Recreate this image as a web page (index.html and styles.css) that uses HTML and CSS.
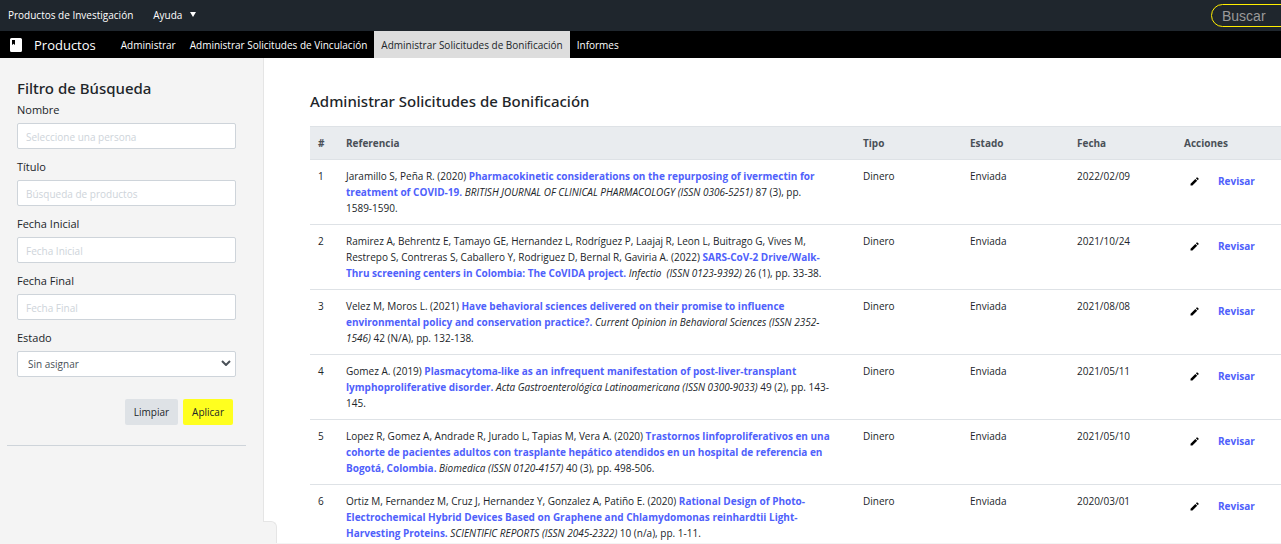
FILE: index.html
```html
<!DOCTYPE html>
<html lang="es">
<head>
<meta charset="utf-8">
<title>Administrar Solicitudes de Bonificación</title>
<link rel="stylesheet" href="styles.css">
</head>
<body>
<svg class="sprite" aria-hidden="true">
  <symbol id="pencil" viewBox="0 0 10 10"><path d="M0.6 7.4 5.9 2.1 8 4.2 2.7 9.5H0.6zM6.6 1.4 7.4 0.6Q7.9 0.3 8.3 0.6L9.5 1.8Q9.8 2.2 9.5 2.6L8.7 3.5z"/></symbol>
</svg>
<header class="topbar">
  <a class="topbar-link" href="#">Productos de Investigación</a>
  <button class="topbar-link topbar-menu" type="button">Ayuda <span class="caret"></span></button>
  <input class="search" type="search" placeholder="Buscar" aria-label="Buscar">
</header>
<nav class="navbar">
  <a class="brand" href="#">
    <svg class="brand-icon" viewBox="0 0 12 14"><path fill="#fff" fill-rule="evenodd" d="M1.5 0H10.5Q12 0 12 1.5V12.5Q12 14 10.5 14H1.5Q0 14 0 12.5V1.5Q0 0 1.5 0ZM2 2V7L3.5 5.8 5 7V2Z"/></svg>
    <span>Productos</span>
  </a>
  <a class="nav-link" href="#">Administrar</a>
  <a class="nav-link" href="#">Administrar Solicitudes de Vinculación</a>
  <a class="nav-link active" href="#">Administrar Solicitudes de Bonificación</a>
  <a class="nav-link" href="#">Informes</a>
</nav>
<div class="layout">
  <aside class="sidebar">
    <form class="filter">
      <h2 class="filter-title">Filtro de Búsqueda</h2>
      <div class="field"><label for="nombre">Nombre</label><input class="control" id="nombre" type="text" placeholder="Seleccione una persona"></div>
      <div class="field"><label for="titulo">Título</label><input class="control" id="titulo" type="text" placeholder="Búsqueda de productos"></div>
      <div class="field"><label for="inicial">Fecha Inicial</label><input class="control" id="inicial" type="text" placeholder="Fecha Inicial"></div>
      <div class="field"><label for="final">Fecha Final</label><input class="control" id="final" type="text" placeholder="Fecha Final"></div>
      <div class="field"><label for="estado">Estado</label>
        <div class="select-wrap">
          <select class="control" id="estado"><option>Sin asignar</option></select>
          <svg class="chevron" viewBox="0 0 10 6"><path d="M1 1 5 5 9 1" fill="none" stroke="#495057" stroke-width="2"/></svg>
        </div>
      </div>
      <div class="actions">
        <button class="btn" type="reset">Limpiar</button>
        <button class="btn btn-apply" type="button">Aplicar</button>
      </div>
    </form>
    <button class="drawer-tab" type="button" aria-label="Panel"></button>
  </aside>
  <main class="content">
    <h1 class="title">Administrar Solicitudes de Bonificación</h1>
    <table class="requests">
      <colgroup><col class="col-num"><col><col class="col-data"><col class="col-data"><col class="col-data"><col class="col-actions"></colgroup>
      <thead><tr><th>#</th><th>Referencia</th><th>Tipo</th><th>Estado</th><th>Fecha</th><th>Acciones</th></tr></thead>
      <tbody>
        <tr><td>1</td><td>Jaramillo S, Peña R. (2020) <a href="#">Pharmacokinetic considerations on the repurposing of ivermectin for treatment of COVID-19.</a> <em>BRITISH JOURNAL OF CLINICAL PHARMACOLOGY (ISSN 0306-5251)</em> 87 (3), pp. <span class="keep">1589-1590.</span></td><td>Dinero</td><td>Enviada</td><td>2022/02/09</td><td><div class="row-actions"><svg class="pencil"><use href="#pencil"/></svg><a href="#">Revisar</a></div></td></tr>
        <tr><td>2</td><td>Ramirez A, Behrentz E, Tamayo GE, Hernandez L, Rodríguez P, Laajaj R, Leon L, Buitrago G, Vives M, Restrepo S, Contreras S, Caballero Y, Rodriguez D, Bernal R, Gaviria A. (2022) <a href="#">SARS-CoV-2 Drive/Walk-<br>Thru screening centers in Colombia: The CoVIDA project.</a> <em>Infectio &nbsp;(ISSN 0123-9392)</em> 26 (1), pp. 33-38.</td><td>Dinero</td><td>Enviada</td><td>2021/10/24</td><td><div class="row-actions"><svg class="pencil"><use href="#pencil"/></svg><a href="#">Revisar</a></div></td></tr>
        <tr><td>3</td><td>Velez M, Moros L. (2021) <a href="#">Have behavioral sciences delivered on their promise to influence environmental policy and conservation practice?.</a> <em>Current Opinion in Behavioral Sciences (ISSN 2352-<br>1546)</em> 42 (N/A), pp. 132-138.</td><td>Dinero</td><td>Enviada</td><td>2021/08/08</td><td><div class="row-actions"><svg class="pencil"><use href="#pencil"/></svg><a href="#">Revisar</a></div></td></tr>
        <tr><td>4</td><td>Gomez A. (2019) <a href="#">Plasmacytoma-like as an infrequent manifestation of post-liver-transplant lymphoproliferative disorder.</a> <em>Acta Gastroenterológica Latinoamericana (ISSN 0300-9033)</em> 49 (2), pp. 143-<br>145.</td><td>Dinero</td><td>Enviada</td><td>2021/05/11</td><td><div class="row-actions"><svg class="pencil"><use href="#pencil"/></svg><a href="#">Revisar</a></div></td></tr>
        <tr><td>5</td><td>Lopez R, Gomez A, Andrade R, Jurado L, Tapias M, Vera A. (2020) <a href="#">Trastornos linfoproliferativos en una cohorte de pacientes adultos con trasplante hepático atendidos en un hospital de referencia en Bogotá, Colombia.</a> <em>Biomedica (ISSN 0120-4157)</em> 40 (3), pp. 498-506.</td><td>Dinero</td><td>Enviada</td><td>2021/05/10</td><td><div class="row-actions"><svg class="pencil"><use href="#pencil"/></svg><a href="#">Revisar</a></div></td></tr>
        <tr><td>6</td><td>Ortiz M, Fernandez M, Cruz J, Hernandez Y, Gonzalez A, Patiño E. (2020) <a href="#">Rational Design of Photo-<br>Electrochemical Hybrid Devices Based on Graphene and Chlamydomonas reinhardtii Light-<br>Harvesting Proteins.</a> <em>SCIENTIFIC REPORTS (ISSN 2045-2322)</em> 10 (n/a), pp. 1-11.</td><td>Dinero</td><td>Enviada</td><td>2020/03/01</td><td><div class="row-actions"><svg class="pencil"><use href="#pencil"/></svg><a href="#">Revisar</a></div></td></tr>
      </tbody>
    </table>
  </main>
</div>
</body>
</html>
```
FILE: styles.css
```css
* { box-sizing: border-box; }
body {
  margin: 0;
  height: 100vh;
  display: flex;
  flex-direction: column;
  overflow: hidden;
  background: #fff;
  color: #212529;
  font: 10px/16px "Segoe UI", "Open Sans", "Noto Sans", sans-serif;
}
a { text-decoration: none; color: inherit; }
button, input, select { font: inherit; }
.sprite { position: absolute; width: 0; height: 0; }

.topbar {
  flex: none;
  display: flex;
  align-items: center;
  gap: 20px;
  height: 31px;
  padding-left: 8px;
  background: #1f262d;
  overflow: hidden;
}
.topbar-link { flex: none; padding: 0 0 2px; color: #fff; }
.topbar-menu { display: flex; align-items: center; gap: 8px; border: 0; background: none; }
.caret { border: 3px solid transparent; border-top: 5px solid #fff; border-bottom: 0; }
.search {
  flex: none;
  width: 180px;
  height: 23px;
  margin-left: auto;
  margin-right: -110px;
  padding: 0 10px;
  border: 1px solid #ffee00;
  border-radius: 12px;
  background: transparent;
  color: #fff;
  font: 14px/20px "Liberation Sans", Arial, sans-serif;
}
.search::placeholder { color: #9a9a9a; opacity: 1; }

.navbar { flex: none; display: flex; height: 27px; padding-left: 10px; background: #000; color: #fff; }
.brand { display: flex; align-items: center; gap: 12px; margin-right: 18px; font-size: 13px; }
.brand-icon { width: 12px; height: 14px; }
.nav-link { display: flex; align-items: center; padding: 0 7px; }
.nav-link.active { background: #ddd; color: #212529; }

.layout { flex: 1; min-height: 0; display: flex; border-bottom: 1px solid #f4f4f4; }
.sidebar { position: relative; flex: none; width: 264px; background: #f4f4f4; border-right: 1px solid #e5e5e5; }
.filter { margin: 0 17px 0 7px; padding: 20px 10px; border-bottom: 1px solid #ced4da; }
.filter-title { margin: 0 0 3px; font: 500 15px/21px "Segoe UI", "Noto Sans", sans-serif; }
.field { margin-bottom: 10px; font-size: 11px; }
.field label { display: block; margin-bottom: 5px; }
.control {
  display: block;
  width: 100%;
  height: 26px;
  padding: 2px 8px 0;
  border: 1px solid #ced4da;
  border-radius: 2px;
  background: #fff;
  color: #495057;
  font-size: 10px;
}
.control::placeholder { color: #ced4da; opacity: 1; }
.select-wrap { position: relative; }
.select-wrap .control { appearance: none; padding: 0 10px; }
.chevron { position: absolute; right: 5px; top: 9px; width: 10px; height: 6px; pointer-events: none; }
.actions { display: flex; justify-content: flex-end; gap: 5px; padding: 12px 3px 0 0; }
.btn { height: 26px; padding: 0 9px; border: 0; border-radius: 2px; background: #dee2e6; color: #212529; }
.btn-apply { background: #ffff1f; }
.drawer-tab {
  position: absolute;
  left: 100%;
  bottom: 0;
  width: 14px;
  height: 22px;
  padding: 0;
  border: 1px solid #e5e5e5;
  border-left-width: 0;
  border-bottom: 0;
  border-radius: 0 6px 0 0;
  background: #f4f4f4;
}

.content { flex: 1; min-width: 0; padding: 33px 0 0 46px; overflow: hidden; }
.title { margin: 0 0 14px; font: 500 15px/21px "Segoe UI", "Noto Sans", sans-serif; }
.requests { width: 100%; table-layout: fixed; border-collapse: collapse; }
.col-num { width: 28px; }
.col-data { width: 107px; }
.col-actions { width: 105px; }
.requests th, .requests td { padding: 8px; border-top: 1px solid #dee2e6; text-align: left; vertical-align: top; }
.requests th { background: #e9ecef; color: #495057; font-weight: 700; }
.requests a { color: #4f61fb; font-weight: 700; }
.keep { white-space: nowrap; }
.row-actions { display: flex; align-items: center; gap: 19px; padding: 5px 0 0 6px; }
.pencil { width: 9px; height: 9px; }
```
